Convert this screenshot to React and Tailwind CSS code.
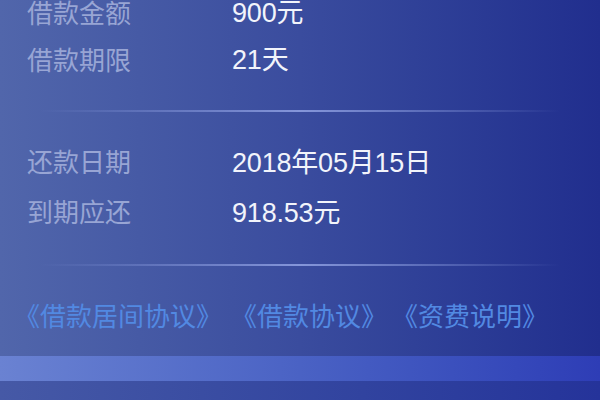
import React from 'react';

const rowsTop = [
    { label: '借款金额', value: '900元' },
    { label: '借款期限', value: '21天' },
];

const rowsBottom = [
    { label: '还款日期', value: '2018年05月15日' },
    { label: '到期应还', value: '918.53元' },
];

const Row = ({ label, value, h }) => (
    <div className={`flex items-center ${h}`}>
        <span className="w-[232px] pl-[27px] text-[26px] leading-none text-[#98a5d4]">{label}</span>
        <span className="text-[27px] leading-none text-[#f2f4fb] tracking-[-0.2px]">{value}</span>
    </div>
);

const Divider = () => (
    <div className="mx-[40px] h-[2px] bg-gradient-to-r from-transparent via-[#8d9ee0] to-transparent opacity-90" />
);

const App = () => {
    return (
        <div
            className="w-[600px] h-[400px] overflow-hidden bg-gradient-to-r from-[#5166ab] via-[#3a4c9e] to-[#212e8e]"
            style={{ fontFamily: '"Liberation Sans", "Noto Sans CJK SC", sans-serif' }}
        >
            <div className="-mt-[10px]">
                {rowsTop.map((r) => (
                    <Row key={r.label} {...r} h="h-[47px]" />
                ))}
            </div>
            <div className="mt-[26px]">
                <Divider />
            </div>
            <div className="mt-[26px]">
                {rowsBottom.map((r) => (
                    <Row key={r.label} {...r} h="h-[50px]" />
                ))}
            </div>
            <div className="mt-[26px]">
                <Divider />
            </div>
            <div className="mt-[36px] h-[30px] flex items-center pl-[14px] text-[26px] leading-none text-[#5289e2]">
                <span>《借款居间协议》</span>
                <span className="ml-[9px]">《借款协议》</span>
                <span className="ml-[5px]">《资费说明》</span>
            </div>
            <div className="mt-[24px] h-[25px] bg-gradient-to-r from-[#6a82d2] via-[#4a62c4] to-[#2e3db6]" />
            <div className="h-[20px] bg-gradient-to-r from-[#4659a6] to-[#25339a]" />
        </div>
    );
};

export default App;
